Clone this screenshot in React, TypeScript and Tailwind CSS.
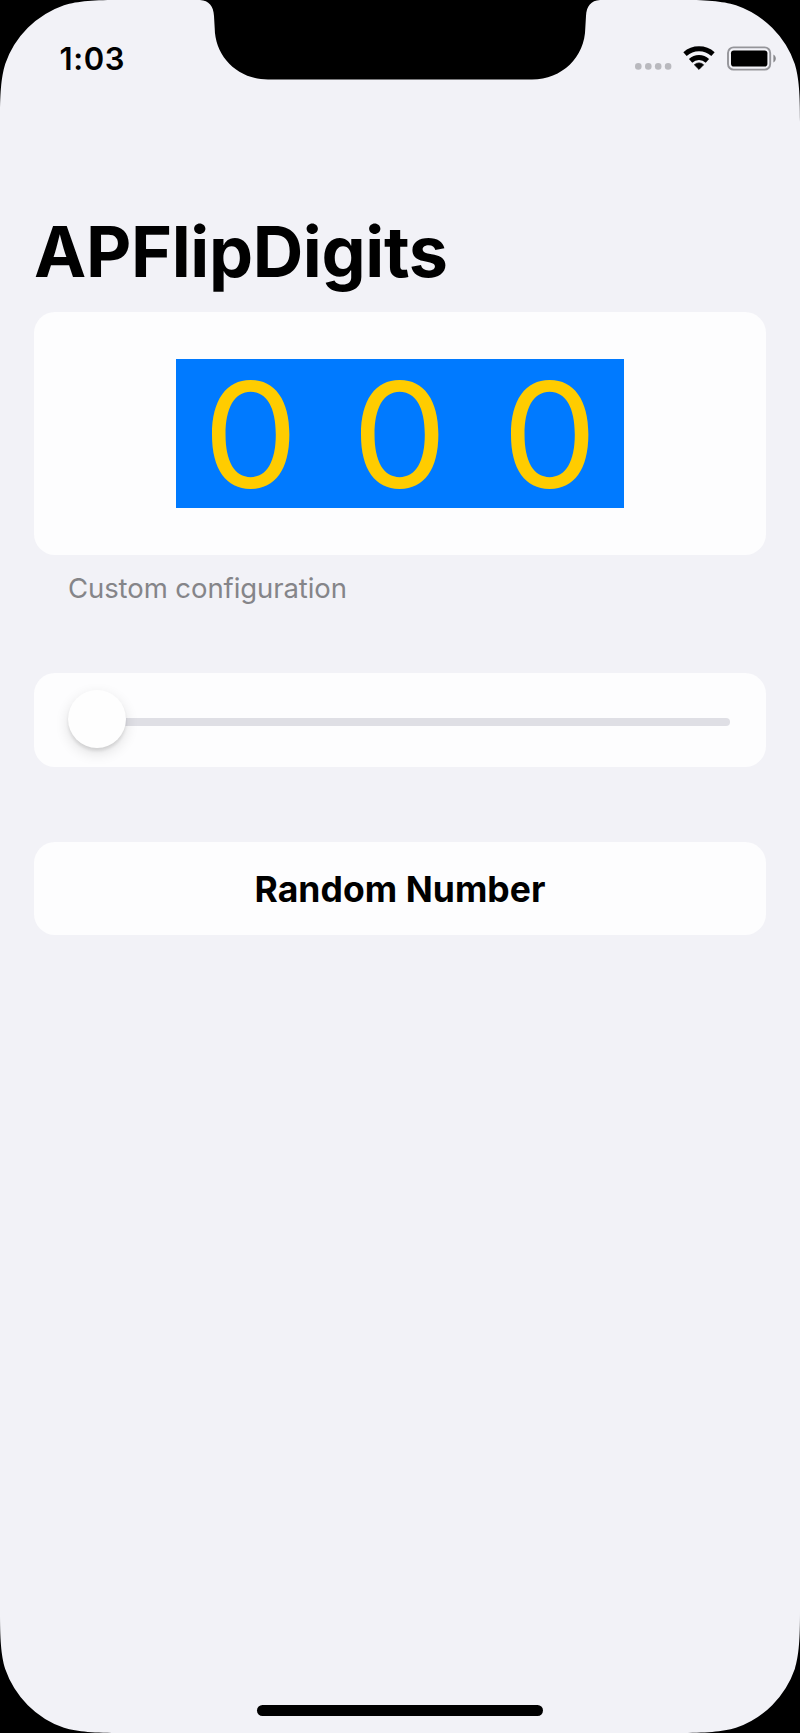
import { useState } from "react";

function Bezel() {
  const corner =
    "M0 0H122C94 0 78 1 64 5.2A95 95 0 0 0 5.2 64C1 78 0 94 0 122Z";
  return (
    <svg
      className="pointer-events-none absolute inset-0"
      width="800"
      height="1733"
      viewBox="0 0 800 1733"
      aria-hidden="true"
    >
      <path d={corner} />
      <path d={corner} transform="matrix(-1 0 0 1 800 0)" />
      <path d={corner} transform="matrix(1 0 0 -1 0 1733)" />
      <path d={corner} transform="matrix(-1 0 0 -1 800 1733)" />
      <path d="M200 0C209 0.5 213.5 6 214 16L214.7 28C215 57 238 79.5 268 79.5H532C562 79.5 585 57 585.3 28L586 16C586.5 6 591 0.5 600 0Z" />
    </svg>
  );
}

function StatusIcons() {
  return (
    <svg width="144" height="26" viewBox="0 0 144 26" aria-hidden="true">
      <g fill="#b9b9be">
        <circle cx="4.3" cy="21.4" r="3.3" />
        <circle cx="14.3" cy="21.4" r="3.3" />
        <circle cx="24.2" cy="21.4" r="3.3" />
        <circle cx="34.1" cy="21.4" r="3.3" />
      </g>
      <g fill="none" stroke="#000" strokeWidth="5">
        <path d="M51 9.2A21 21 0 0 1 79 9.2" />
        <path d="M56.6 15.8A12.6 12.6 0 0 1 73.4 15.8" />
      </g>
      <path d="M65 24.4L60.4 19.8A6.6 6.6 0 0 1 69.6 19.8Z" stroke="#000" strokeWidth="0.8" strokeLinejoin="round" />
      <rect x="94" y="2.4" width="42.2" height="22.2" rx="5.6" fill="none" stroke="#95959a" strokeWidth="1.9" />
      <rect x="97" y="5.4" width="36.4" height="16.2" rx="2.8" />
      <path d="M139.4 9.5C142.6 10.9 142.6 16.1 139.4 17.5Z" fill="#88888c" />
    </svg>
  );
}

function FlipDigits({ value }: { value: number }) {
  return (
    <div className="flex h-[149.5px] w-[448.5px] bg-[#007aff]">
      {String(value)
        .padStart(3, "0")
        .split("")
        .map((digit, i) => (
          <span
            key={i}
            className="flex flex-1 scale-x-[1.035] items-center justify-center pt-[2px] text-[146px] leading-none text-[#ffcc00]"
          >
            {digit}
          </span>
        ))}
    </div>
  );
}

export default function App() {
  const [value, setValue] = useState(0);
  return (
    <div className="relative flex h-[1733px] w-[800px] flex-col overflow-hidden bg-[#f2f2f7] font-['Inter',sans-serif] text-black">
      <header className="flex h-[212px] items-start justify-between pt-[45px] pr-[22px] pl-[59.5px]">
        <time className="text-[31px] leading-[28px] font-semibold tracking-[0.6px]">1:03</time>
        <StatusIcons />
      </header>

      <main className="flex flex-1 flex-col px-[34px]">
        <h1 className="h-[100px] text-[70px] leading-[80px] font-bold tracking-[-0.35px]">APFlipDigits</h1>

        <section className="flex h-[243px] items-center justify-center rounded-[21px] bg-[#fdfdfe]">
          <FlipDigits value={value} />
        </section>
        <p className="h-[118px] pt-[17px] pl-[34px] text-[27.5px] leading-[32px] tracking-[-0.08px] text-[#858589]">
          Custom configuration
        </p>

        <section className="flex h-[94px] items-center rounded-[21px] bg-[#fdfdfe] pr-[36px] pl-[34px]">
          <div className="flex w-full items-center">
            <div className="z-10 -mt-[2px] size-[58px] shrink-0 rounded-full bg-[#fefefe] shadow-[0_5px_14px_rgba(0,0,0,0.12),0_3px_3px_rgba(0,0,0,0.09)]" />
            <div className="mt-[3px] -ml-[4px] h-[8px] flex-1 rounded-full bg-[#dfdfe5]" />
          </div>
        </section>

        <button
          type="button"
          onClick={() => setValue(Math.floor(Math.random() * 1000))}
          className="mt-[75px] h-[93px] rounded-[21px] bg-[#fdfdfe] pt-[2px] text-[35.5px] font-[650] tracking-[0.05px]"
        >
          Random Number
        </button>
      </main>

      <footer className="flex h-[28px] justify-center">
        <div className="h-[11px] w-[286px] rounded-full bg-black" />
      </footer>
      <Bezel />
    </div>
  );
}
